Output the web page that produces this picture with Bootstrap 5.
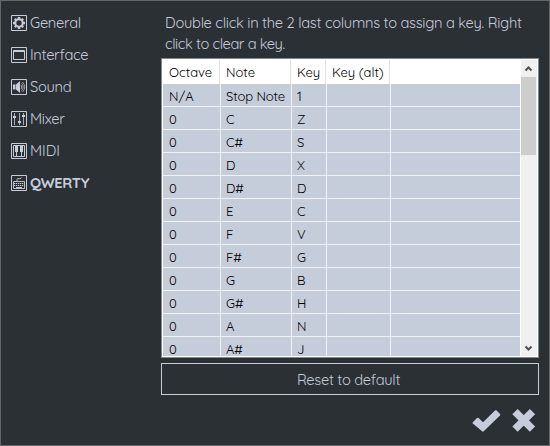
<!DOCTYPE html>
<html lang="en">
<head>
<meta charset="utf-8">
<title>Settings</title>
<link href="https://cdn.jsdelivr.net/npm/bootstrap@5.3.0/dist/css/bootstrap.min.css" rel="stylesheet">
<style>
:root{--ink:#c5ccda;--bg:#2b3034}
body{font-family:Quicksand,Lato,"Open Sans",sans-serif;font-size:14.67px;color:var(--ink);background:var(--bg);overflow:hidden}
.window{width:550px;height:446px;border:1px solid #656768}
.sidebar{width:160px;padding:13px 0 0 10px}
.side-link{height:32px;padding:1px 0 0;color:var(--ink);gap:3px;line-height:16px;align-items:flex-start;letter-spacing:-.3px}
.side-link svg{width:16px;height:16px;flex:none}
.side-link span{white-space:nowrap;line-height:18px;margin-top:-1px}
.side-link .t5{letter-spacing:0}
.main-pane{width:378px}
.hint{height:57px;padding:11px 0 0 4px;line-height:21px;white-space:nowrap;letter-spacing:-.27px}
.hint-end{letter-spacing:-.42px}
.grid-box{height:300px;border:1px solid #828790;background:#fff;padding:1px;color:#000;font-size:13px}
.grid-body{width:357px;overflow:hidden}
.grid-line{height:23px;background:var(--ink);border-bottom:1px solid #f1f2f4}
.grid-line>div{border-right:1px solid #f1f2f4;padding:1px 0 0 5px;line-height:22px;white-space:nowrap}
.grid-line>div:first-child{padding-left:6px}
.grid-line>div:last-child{border:0}
.grid-line.grid-head{height:24px;border:0;background:#fff}
.grid-line.grid-head>div{padding:1px 0 0 6px;border-color:#e2e2e2}
.grid-line:not(.grid-head) .c2{letter-spacing:-.1px}
.c1{width:58px}.c2{width:71px}.c3{width:35px}.c4{width:64px}
.grid-head .c1{width:57px}
.scroll{width:16px;margin-left:1px;background:#f0f0f0}
.scroll svg{width:16px;height:17px;display:block}
.thumb{height:78px;width:15px;background:#cdcdcd}
.reset{height:32px;margin-top:5px;border:1px solid var(--ink);border-radius:0;color:var(--ink);font-size:14.67px;padding:0 3px 0 0;line-height:31px;letter-spacing:-.28px}
.actions{padding:13px 2px 0 0;gap:10px}
</style>
<script src="https://cdn.jsdelivr.net/npm/bootstrap@5.3.0/dist/js/bootstrap.bundle.min.js"></script>
</head>
<body>
<div class="window d-flex">
<nav class="sidebar nav flex-column flex-nowrap flex-shrink-0">
<a class="side-link d-flex text-decoration-none"><svg viewBox="0 0 16 16" fill="none" stroke="#c6ccda"><path d="M.5.5h15v15H.5z"/><circle cx="8" cy="8" r="3.700" stroke-width="2"/><path stroke-width="2.400" d="M8 2v2M8 12v2M2 8h2M12 8h2M3.800 3.800l1.400 1.400M10.800 10.800l1.400 1.400M3.800 12.200l1.400-1.400M10.800 5.200l1.400-1.400"/></svg><span>General</span></a>
<a class="side-link d-flex text-decoration-none"><svg viewBox="0 0 16 16" fill="none" stroke="#c6ccda"><path d="M.5.5h15v15H.5zM2.500 3.500h11v9h-11zM2.500 4.500h11"/></svg><span>Interface</span></a>
<a class="side-link d-flex text-decoration-none"><svg viewBox="0 0 16 16" fill="none" stroke="#c6ccda"><path d="M.5.5h15v15H.5z"/><path fill="#c6ccda" stroke="none" d="M2 5.500h2.500v5H2zM5 5.500L9 2v12L5 10.500z"/><path stroke-width=".7" d="M10 6q1.500 2 0 4M10.500 4.300q3.300 3.700 0 7.400M11.500 3q4.500 5 0 10"/></svg><span>Sound</span></a>
<a class="side-link d-flex text-decoration-none"><svg viewBox="0 0 16 16" fill="none" stroke="#c6ccda"><path d="M.5.5h15v15H.5z"/><path d="M3.500 2v12M8.500 2v12M12.500 2v12" stroke-width=".8"/><path stroke-width="2" d="M2 6h3M7 11h3M11 5h3"/></svg><span>Mixer</span></a>
<a class="side-link d-flex text-decoration-none"><svg viewBox="0 0 16 16"><path fill="none" stroke="#c6ccda" d="M.5.5h15v15H.5zM2.500 2.500h11v11h-11z"/><path fill="#c6ccda" d="M4 3h3v6H6v4H5V9H4zM9 3h3v6h-1v4h-1V9H9z"/></svg><span class="t5">MIDI</span></a>
<a class="side-link d-flex text-decoration-none"><svg viewBox="0 0 16 16" fill="none" stroke="#c6ccda"><path d="M.5.5h15v15H.5z"/><path stroke-width=".9" d="M6 6V4.500q0-.8 1-.8h2q1 0 1.500-1.200M2.500 6.500h11v7h-11z"/><path stroke-dasharray="1.300 .7" d="M3 8.500h10M3 10.500h10"/><path d="M5 12.500h6"/></svg><span class="fw-bold">QWERTY</span></a>
</nav>
<main class="main-pane d-flex flex-column">
<div class="hint"><div>Double click in the 2 last columns to assign a key. Right</div><div class="hint-end">click to clear a key.</div></div>
<div class="grid-box d-flex">
<div class="grid-body flex-shrink-0" id="rows"><div class="grid-line grid-head d-flex"><div class="c1">Octave</div><div class="c2">Note</div><div class="c3">Key</div><div class="c4">Key (alt)</div><div></div></div></div>
<div class="scroll d-flex flex-column"><svg viewBox="0 0 16 17"><path d="M4.500 10.500l3-3 3 3" fill="none" stroke="#505050" stroke-width="2"/></svg><div class="thumb"></div><svg class="mt-auto" viewBox="0 0 16 17"><path d="M4.500 7.500l3 3 3-3" fill="none" stroke="#505050" stroke-width="2"/></svg></div>
</div>
<button class="btn reset w-100">Reset to default</button>
<div class="actions d-flex justify-content-end">
<svg width="29" height="25" viewBox="0 0 29 25" fill="#c6ccda"><path d="M.8 14.200L5 10q.8-.6 1.600 0L11 14.300 23 2.500q.8-.7 1.600 0l3.400 3.400q.7.8 0 1.600L11.700 23.300q-.8.7-1.600 0L.8 15.500q-.6-.7 0-1.300z"/></svg>
<svg width="26" height="25" viewBox="0 0 26 25" fill="none" stroke="#c6ccda" stroke-width="7.500" stroke-linejoin="round"><path d="M4 3.700l17.500 17.500M21.500 3.700L4 21.200"/></svg>
</div>
</main>
</div>
<script>
const data=[["N/A","Stop Note","1"],["0","C","Z"],["0","C#","S"],["0","D","X"],["0","D#","D"],["0","E","C"],["0","F","V"],["0","F#","G"],["0","G","B"],["0","G#","H"],["0","A","N"],["0","A#","J"]];
document.getElementById("rows").insertAdjacentHTML("beforeend",data.map(r=>`<div class="grid-line d-flex"><div class="c1">${r[0]}</div><div class="c2">${r[1]}</div><div class="c3">${r[2]}</div><div class="c4"></div><div></div></div>`).join(""));
</script>
</body>
</html>
